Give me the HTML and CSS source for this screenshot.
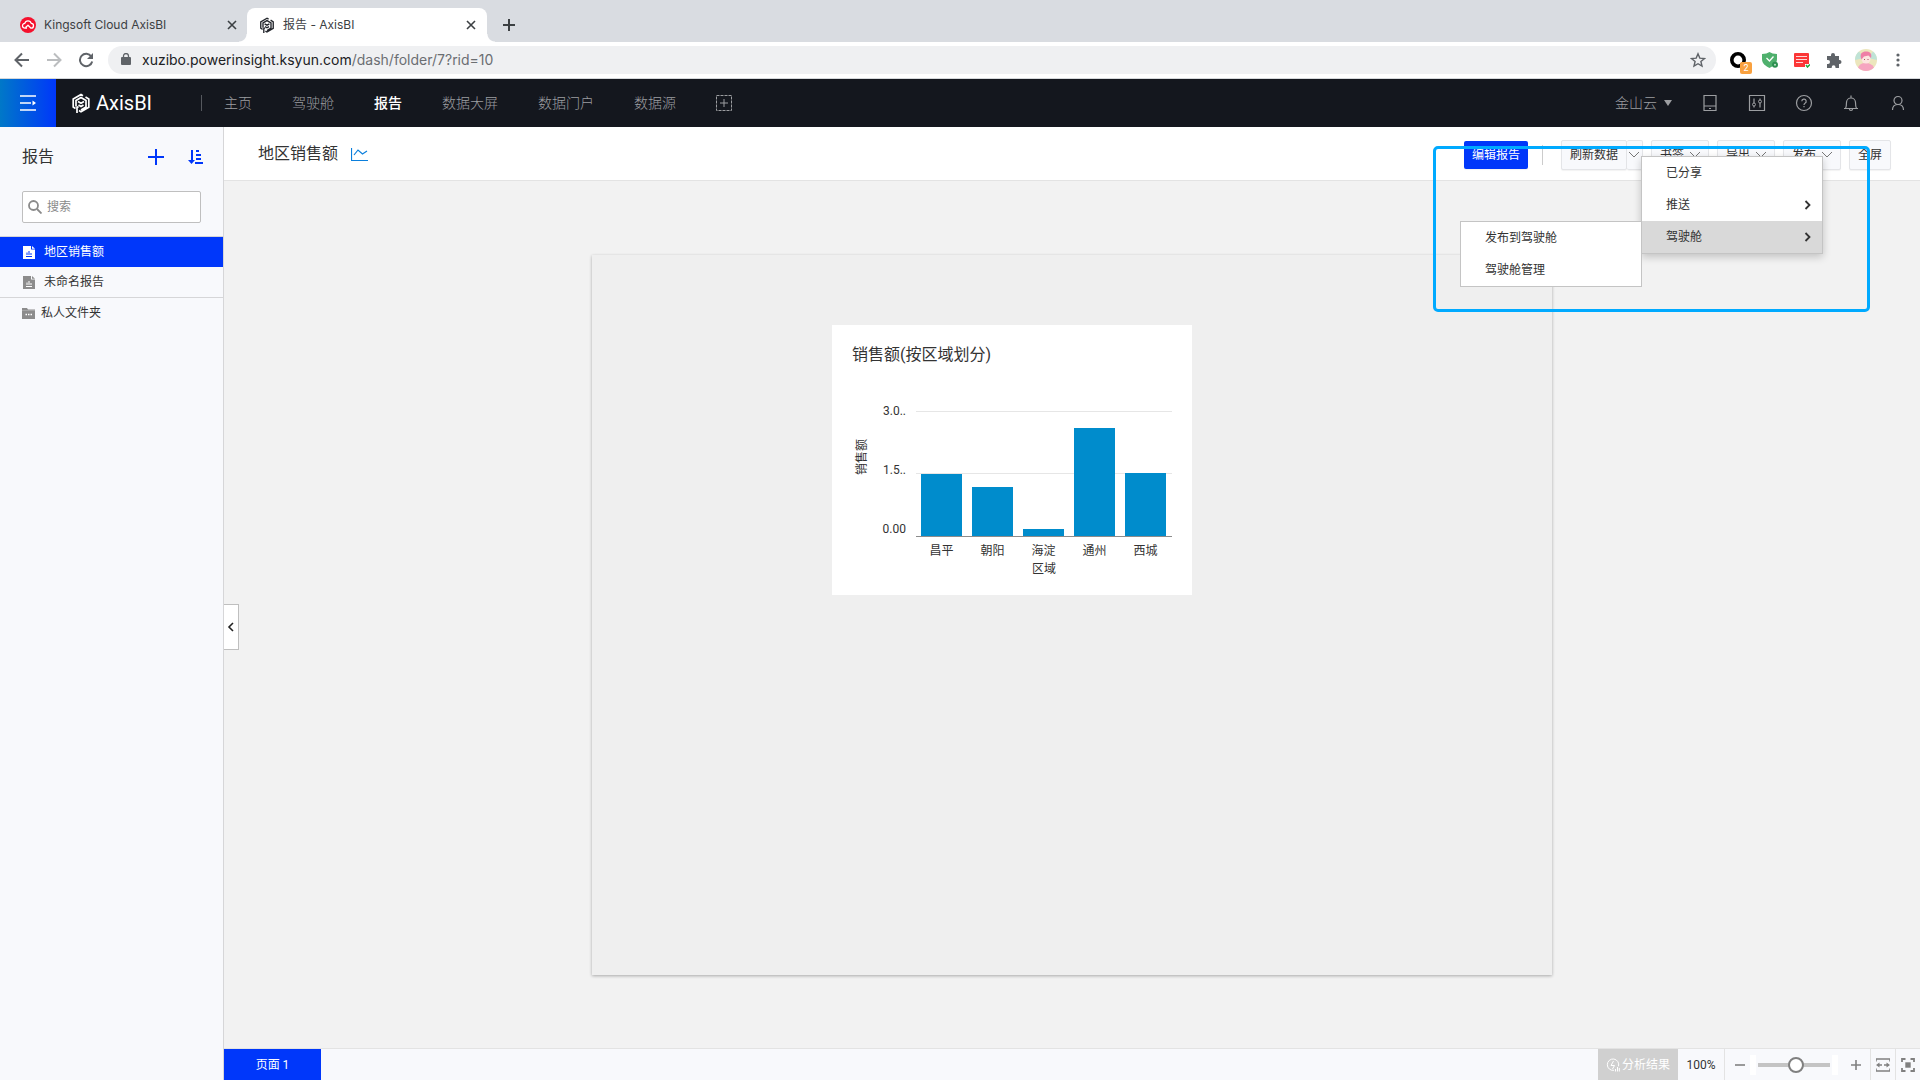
FILE: index.html
```
<!DOCTYPE html>
<html lang="zh-CN">
<head>
  <meta charset="UTF-8" />
  <meta name="viewport" content="width=device-width, initial-scale=1" />
  <title>报告 - AxisBI</title>
  <link rel="stylesheet" href="styles.css">
</head>
<body>
  <svg class="sprite" aria-hidden="true">
    <symbol id="close" viewBox="0 0 10 10"><path d="M1 1l8 8M9 1l-8 8" fill="none" stroke="currentColor" stroke-width="1.6" /></symbol>
    <symbol id="chevron-down" viewBox="0 0 10 8"><path d="M0 1l5 5 5-5" fill="none" stroke="currentColor" /></symbol>
    <symbol id="chevron-right" viewBox="0 0 8 10"><path d="M1.500 1l4 4-4 4" fill="none" stroke="currentColor" stroke-width="1.8" /></symbol>
    <symbol id="logo" viewBox="0 0 18 20">
      <path d="M3.500 15.500L1.200 14V6L9 1.500l2 1.200M4 13.500V7.500l5-3 5 3v6.500l-5 3M13.500 4L16.800 6v8.300L9 18.800l-2-1.200M5 20v-5.500l1.500-1" fill="none" stroke="currentColor" stroke-width="1.700" />
      <path d="M6 8.500l3 1.700 3-1.700M6.500 12l2.500 1.500 2.500-1.500" fill="none" stroke="currentColor" stroke-width="1.700" />
    </symbol>
    <symbol id="report" viewBox="0 0 12 13">
      <path d="M0 0h8v3.500h4V13H0z" fill="currentColor" /><path d="M9 0l3 2.700H9z" fill="currentColor" />
      <path class="cut" d="M3 10.500h6M4 9V6.500M6 9V5M8 9V7" fill="none" />
    </symbol>
  </svg>

  <div class="tab-strip">
    <div class="tab">
      <svg class="favicon" viewBox="0 0 16 16"><circle cx="8" cy="8" r="8" fill="#f5112d" /><path d="M7 11.200H5a2.400 2.400 0 0 1-.2-4.800 3.300 3.300 0 0 1 6.400 0 2.400 2.400 0 0 1-.2 4.800L8 8.200l-2.500 2.300" fill="none" stroke="#fff" stroke-width="1.300" stroke-linejoin="round" /></svg>
      <span>Kingsoft Cloud AxisBI</span>
      <button type="button" aria-label="Close tab"><svg width="10" height="10"><use href="#close" /></svg></button>
    </div>
    <div class="tab active">
      <svg class="favicon dark"><use href="#logo" /></svg>
      <span>报告 - AxisBI</span>
      <button type="button" aria-label="Close tab"><svg width="10" height="10"><use href="#close" /></svg></button>
    </div>
    <button class="new-tab" type="button" aria-label="New tab"><svg width="12" height="12" viewBox="0 0 12 12"><path d="M6 0v12M0 6h12" stroke="#3c4043" stroke-width="2" /></svg></button>
  </div>

  <div class="toolbar">
    <div class="history">
      <button type="button" aria-label="Back"><svg width="16" height="16" viewBox="0 0 16 16"><path d="M15 8H2M8 1.500L1.500 8 8 14.500" fill="none" stroke="#5f6368" stroke-width="2" /></svg></button>
      <button type="button" aria-label="Forward"><svg width="16" height="16" viewBox="0 0 16 16"><path d="M1 8h13M8 1.500L14.500 8 8 14.500" fill="none" stroke="#bbbdbf" stroke-width="2" /></svg></button>
      <button type="button" aria-label="Reload"><svg width="16" height="16" viewBox="0 0 16 16"><path d="M13.300 4.500A6.200 6.200 0 1 0 14.200 9.500" fill="none" stroke="#5f6368" stroke-width="2" /><path d="M15 1v6H9z" fill="#5f6368" /></svg></button>
    </div>
    <div class="address">
      <svg width="10" height="13" viewBox="0 0 10 13"><rect y="4" width="10" height="8" rx="1" fill="#5f6368" /><path d="M2.500 5V3a2.500 2.500 0 0 1 5 0v2" fill="none" stroke="#5f6368" stroke-width="1.300" /></svg>
      <span class="url">xuzibo.powerinsight.ksyun.com<span>/dash/folder/7?rid=10</span></span>
      <svg width="16" height="16" viewBox="0 0 16 16"><path d="M8 1.800l1.800 4.300 4.700.4-3.600 3 1.100 4.600L8 11.700 4 14.100l1.100-4.600-3.600-3 4.700-.4z" fill="none" stroke="#5f6368" stroke-width="1.400" /></svg>
    </div>
    <div class="extensions">
      <span class="ext"><svg width="16" height="16" viewBox="0 0 16 16"><circle cx="8" cy="8" r="6.200" fill="none" stroke="#000" stroke-width="3.600" /></svg><b class="badge">2</b></span>
      <span class="ext"><svg width="16" height="16" viewBox="0 0 16 16"><path d="M0 2q5 0 7.500-2Q10 2 15 2v5c0 5-4 7-7.500 9C4 14 0 12 0 7z" fill="#4fb06d" /><path d="M4.500 6l3 3 4-4.500" fill="none" stroke="#fff" stroke-width="1.300" /><circle cx="13" cy="12.800" r="3" fill="#2c8f50" /><circle cx="13" cy="12.800" r="1" fill="#bfe5ca" /></svg></span>
      <span class="ext"><svg width="16" height="16" viewBox="0 0 16 16"><rect y="1" width="15" height="14" rx="1" fill="#fb3737" /><path d="M2 4.500h11M2 7.500h11M2 10.500h7" stroke="#ffd9d9" /><path d="M11 12h5v4h-5z" fill="#fff" /><path d="M12 13l1.500 2 2.500-2.500" fill="none" stroke="#1fa83c" stroke-width="1.500" /></svg></span>
      <span class="ext"><svg width="16" height="16" viewBox="0 0 16 16"><path d="M1 4h4V3a2 2 0 0 1 4 0v1h4v4h.5a2 2 0 0 1 0 4H13v4H9.500v-.8a1.900 1.900 0 0 0-3.800 0v.8H1v-4h1a2 2 0 0 0 0-4H1z" fill="#5f6368" /></svg></span>
      <span class="ext"><svg width="22" height="22" viewBox="0 0 22 22"><circle cx="11" cy="11" r="11" fill="#ece6bd" /><path d="M0 11a11 11 0 0 1 4-8.500L9 9zM22 11a11 11 0 0 0-4-8.500L13 9z" fill="#bfe3d6" /><path d="M3 18.500c2-4 5-4.500 8-4.500s6 1 8 4.500a11 11 0 0 1-16 0z" fill="#f6a5c0" /><circle cx="11" cy="10" r="4.500" fill="#fde5e0" /><path d="M6 9C4.500 4 8 2 12 2.500c4 .5 5 3.500 4 6.500L13.500 6.500 9 7.500l-2.500 3z" fill="#ef7fa6" /><path d="M9 10.500h1M12.500 10.500h1" stroke="#a56" /></svg></span>
      <button class="ext" type="button" aria-label="Menu"><svg width="4" height="14" viewBox="0 0 4 14"><g fill="#5f6368"><circle cx="2" cy="2" r="1.600" /><circle cx="2" cy="7" r="1.600" /><circle cx="2" cy="12" r="1.600" /></g></svg></button>
    </div>
  </div>

  <header class="app-header">
    <button class="menu-btn" type="button" aria-label="菜单"><svg width="16" height="16" viewBox="0 0 16 16"><path d="M0 1h16M0 8h11M0 15h16" stroke="#fff" stroke-width="1.500" /><path d="M12.500 5.500L16 8l-3.500 2.500z" fill="#fff" /></svg></button>
    <a class="brand" href="#"><svg width="18" height="20"><use href="#logo" /></svg>AxisBI</a>
    <nav class="main-nav">
      <a href="#">主页</a>
      <a href="#">驾驶舱</a>
      <a class="current" href="#">报告</a>
      <a href="#">数据大屏</a>
      <a href="#">数据门户</a>
      <a href="#">数据源</a>
      <button type="button" aria-label="添加"><svg width="16" height="16" viewBox="0 0 16 16"><rect x=".5" y=".5" width="15" height="15" fill="none" stroke="#9c9ea1" stroke-dasharray="3 1" /><path d="M8 4v8M4 8h8" stroke="#9c9ea1" /></svg></button>
    </nav>
    <div class="account">
      <button class="tenant" type="button">金山云<svg width="8" height="6" viewBox="0 0 8 6"><path d="M0 0h8L4 6z" fill="currentColor" /></svg></button>
      <button type="button" aria-label="手机"><svg width="18" height="18" viewBox="0 0 18 18"><path d="M3 1.500h12v15H3zM3 12h12M8 14.500h2" fill="none" stroke="currentColor" stroke-width="1.200" /></svg></button>
      <button type="button" aria-label="设置"><svg width="18" height="18" viewBox="0 0 18 18"><path d="M1.500 1.500h15v15h-15zM6 4.500v9M12 4.500v9" fill="none" stroke="currentColor" stroke-width="1.200" /><g fill="#14171e" stroke="currentColor"><circle cx="6" cy="10.500" r="1.500" /><circle cx="12" cy="7.500" r="1.500" /></g></svg></button>
      <button type="button" aria-label="帮助"><svg width="18" height="18" viewBox="0 0 18 18"><g fill="none" stroke="currentColor" stroke-width="1.200"><circle cx="9" cy="9" r="7.500" /><path d="M6.800 7.200a2.200 2.200 0 1 1 3.200 2c-.8.400-1 .8-1 1.700M9 12v1.300" /></g></svg></button>
      <button type="button" aria-label="通知"><svg width="18" height="18" viewBox="0 0 18 18"><g fill="none" stroke="currentColor" stroke-width="1.200"><path d="M2 14.500h14M3.500 14.500c1-1.500 1-3 1-6a4.500 4.500 0 0 1 9 0c0 3 0 4.500 1 6M7.500 15a1.500 1.500 0 0 0 3 0M9 1.500V4" /></g></svg></button>
      <button type="button" aria-label="用户"><svg width="18" height="18" viewBox="0 0 18 18"><g fill="none" stroke="currentColor" stroke-width="1.200"><circle cx="9" cy="6.500" r="4" /><path d="M3.500 16c0-3.500 2-5.500 5.500-5.500s5.500 2 5.500 5.500" /></g></svg></button>
    </div>
  </header>

  <div class="workspace">
    <aside class="sidebar">
      <div class="sidebar-head">
        <h2>报告</h2>
        <button type="button" aria-label="新建"><svg width="16" height="16" viewBox="0 0 16 16"><path d="M8 0v16M0 8h16" stroke="currentColor" stroke-width="2" /></svg></button>
        <button type="button" aria-label="排序"><svg width="16" height="16" viewBox="0 0 16 16"><path d="M4 1v12M8 2h3M8 6h5M8 10h5M7 14h8" stroke="currentColor" stroke-width="2" /><path d="M0 11h7l-3.500 4z" fill="currentColor" /></svg></button>
      </div>
      <div class="search">
        <svg width="14" height="14" viewBox="0 0 14 14"><g fill="none" stroke="#8a8a8a" stroke-width="1.800"><circle cx="5.500" cy="5.500" r="4.500" /><path d="M9 9l4.500 4.500" /></g></svg>
        <input type="text" placeholder="搜索" aria-label="搜索" />
      </div>
      <ul class="report-list">
        <li class="selected"><a href="#"><svg width="12" height="13"><use href="#report" /></svg>地区销售额</a></li>
        <li><a href="#"><svg width="12" height="13"><use href="#report" /></svg>未命名报告</a></li>
      </ul>
      <a class="folder" href="#"><svg width="13" height="11" viewBox="0 0 13 11"><path d="M0 0h5l1 1.500h7V11H0z" fill="#8c8c8c" /><path d="M0 2.500h13" stroke="#b5b5b5" stroke-width=".6" /><path d="M3.500 6.500h1.500M6 6.500h1.500M8.500 6.500H10" stroke="#fff" stroke-width="1.300" /></svg>私人文件夹</a>
    </aside>

    <main class="content">
      <div class="report-bar">
        <h1>地区销售额</h1>
        <svg width="17" height="14" viewBox="0 0 17 14"><path d="M.5 1v12.500H17M3 8l4-5 4.500 4L16 4" fill="none" stroke="#0b7fdc" stroke-width="1.200" /></svg>
        <div class="actions">
          <button class="btn primary" type="button">编辑报告</button>
          <div class="split">
            <button class="btn" type="button">刷新数据</button>
            <button class="btn arrow" type="button" aria-label="刷新选项"><svg width="10" height="8"><use href="#chevron-down" /></svg></button>
          </div>
          <button class="btn" type="button">书签<svg width="10" height="8"><use href="#chevron-down" /></svg></button>
          <button class="btn" type="button">导出<svg width="10" height="8"><use href="#chevron-down" /></svg></button>
          <div class="dropdown">
            <button class="btn" type="button">发布<svg width="10" height="8"><use href="#chevron-down" /></svg></button>
            <div class="menu">
              <button type="button">已分享</button>
              <button type="button">推送<svg width="8" height="10"><use href="#chevron-right" /></svg></button>
              <button class="hover" type="button">驾驶舱<svg width="8" height="10"><use href="#chevron-right" /></svg></button>
              <div class="submenu">
                <button type="button">发布到驾驶舱</button>
                <button type="button">驾驶舱管理</button>
              </div>
            </div>
          </div>
          <button class="btn" type="button">全屏</button>
          <div class="highlight"></div>
        </div>
      </div>

      <div class="canvas">
        <button class="collapse" type="button" aria-label="收起"><svg width="8" height="10" viewBox="0 0 8 10"><path d="M6 1L2 5l4 4" fill="none" stroke="#222" stroke-width="1.600" /></svg></button>
        <div class="board">
          <section class="card">
            <h3>销售额(按区域划分)</h3>
            <div class="chart">
              <div class="y-title">销售额</div>
              <div class="y-axis"><span>3.0..</span><span>1.5..</span><span>0.00</span></div>
              <div class="plot">
                <div class="bars">
                  <div style="height: 49%"></div>
                  <div style="height: 39%"></div>
                  <div style="height: 5%"></div>
                  <div style="height: 86%"></div>
                  <div style="height: 50%"></div>
                </div>
                <div class="x-axis"><span>昌平</span><span>朝阳</span><span>海淀</span><span>通州</span><span>西城</span></div>
                <div class="x-title">区域</div>
              </div>
            </div>
          </section>
        </div>
      </div>

      <footer class="status-bar">
        <button class="page-tab" type="button">页面 1</button>
        <button class="analysis" type="button" disabled><svg width="14" height="14" viewBox="0 0 14 14"><g fill="none" stroke="currentColor"><path d="M8 12.300a5.700 5.700 0 1 1 4.500-4M7.500 3L5 7.500h3.500L6.500 11" /><path d="M9.500 13.500V11M11.500 13.500V9M13.300 13.500V10" /></g></svg>分析结果</button>
        <span class="percent">100%</span>
        <div class="zoom">
          <button type="button" aria-label="缩小"><svg width="10" height="10" viewBox="0 0 10 10"><path d="M0 5h10" stroke="#808080" stroke-width="1.600" /></svg></button>
          <input type="range" min="0" max="200" value="108" aria-label="缩放" />
          <button type="button" aria-label="放大"><svg width="10" height="10" viewBox="0 0 10 10"><path d="M0 5h10M5 0v10" stroke="#808080" stroke-width="1.600" /></svg></button>
        </div>
        <button class="fit" type="button" aria-label="适应宽度"><svg width="14" height="14" viewBox="0 0 14 14"><path d="M0 3.500V1h14v2.500M0 10.500V13h14v-2.500M2 7h4M8 7h4" fill="none" stroke="#808080" stroke-width="1.500" /><path d="M0 7l3.500-2.500v5zM14 7l-3.500-2.500v5z" fill="#808080" /></svg></button>
        <button class="fit" type="button" aria-label="适应页面"><svg width="14" height="14" viewBox="0 0 14 14"><path d="M1 4V1h3.500M9.500 1H13v3M13 10v3H9.500M4.500 13H1v-3" fill="none" stroke="#808080" stroke-width="1.800" /><path d="M4.300 4.300h5.400v5.400H4.300z" fill="#808080" /></svg></button>
      </footer>
    </main>
  </div>
</body>
</html>
```
FILE: styles.css
```
:root {
  --blue: #0037fa;
  --dark: #14171e;
  --panel: #f8f9fc;
  --line: #d6d6d8;
  --text: #333;
  --bar: #008ccc;
}

* {
  box-sizing: border-box;
}

body {
  margin: 0;
  height: 100vh;
  display: flex;
  flex-direction: column;
  overflow: hidden;
  font-family: Roboto, "Noto Sans CJK SC", sans-serif;
  font-weight: 400;
  font-size: 12px;
  line-height: 16px;
  color: var(--text);
}

button {
  display: flex;
  align-items: center;
  justify-content: center;
  padding: 0;
  border: 0;
  background: none;
  color: inherit;
  font: inherit;
}

a {
  color: inherit;
  text-decoration: none;
}

svg {
  flex: none;
}

h1, h2, h3 {
  margin: 0;
  font-weight: 400;
  font-size: 16px;
  line-height: 24px;
}

.sprite {
  position: absolute;
  width: 0;
  height: 0;
}

/* browser window */
.tab-strip {
  display: flex;
  height: 42px;
  padding-top: 8px;
  background: #d9dce1;
  color: #3c4043;
  font-family: Inter, "Noto Sans CJK SC", sans-serif;
}

.tab {
  display: flex;
  align-items: center;
  gap: 8px;
  width: 240px;
  padding: 0 11px 0 12px;
  border-radius: 8px 8px 0 0;
}

.tab:first-child {
  width: 247px;
  padding: 0 10px 0 20px;
}

.tab.active {
  position: relative;
  background: #fff;
}

.tab.active::before,
.tab.active::after {
  content: "";
  position: absolute;
  bottom: 0;
  width: 8px;
  height: 8px;
}

.tab.active::before {
  right: 100%;
  background: radial-gradient(circle at 0 0, transparent 7px, #fff 8px);
}

.tab.active::after {
  left: 100%;
  background: radial-gradient(circle at 100% 0, transparent 7px, #fff 8px);
}

.tab span {
  flex: 1;
}

.favicon {
  width: 16px;
  height: 16px;
}

.favicon.dark {
  color: #23262c;
}

.new-tab {
  width: 44px;
}

.toolbar {
  display: flex;
  align-items: center;
  height: 37px;
  padding-bottom: 1px;
  border-bottom: 1px solid #d5d8db;
  background: #fff;
}

.history {
  display: flex;
  gap: 16px;
  padding: 0 14px;
}

.address {
  display: flex;
  align-items: center;
  flex: 1;
  height: 28px;
  padding: 0 10px 0 13px;
  border-radius: 14px;
  background: #eff0f2;
}

.url {
  flex: 1;
  padding-left: 11px;
  font-family: Inter, sans-serif;
  font-size: 14px;
  color: #202124;
}

.url span {
  color: #6b6e72;
}

.extensions {
  display: flex;
  padding: 0 6px;
}

.ext {
  position: relative;
  display: flex;
  align-items: center;
  justify-content: center;
  width: 32px;
}

.badge {
  position: absolute;
  bottom: -3px;
  left: 18px;
  width: 12px;
  height: 12px;
  border-radius: 2px;
  background: #f9a13f;
  color: #fff;
  font-size: 9px;
  font-weight: 400;
  line-height: 12px;
  text-align: center;
}

/* application header */
.app-header {
  display: flex;
  align-items: center;
  height: 48px;
  background: var(--dark);
  color: #9c9ea1;
  font-size: 14px;
  font-weight: 300;
  line-height: 20px;
}

.menu-btn {
  width: 56px;
  height: 48px;
  background: linear-gradient(90deg, #0078c8, #0037fa);
}

.brand {
  display: flex;
  align-items: center;
  gap: 6px;
  width: 145px;
  padding-left: 16px;
  color: #fff;
  font-size: 20px;
  font-weight: 400;
}

.main-nav {
  display: flex;
  align-items: center;
  gap: 40px;
}

.main-nav::before {
  content: "";
  height: 16px;
  margin-right: -18px;
  border-left: 1px solid #55585e;
}

.main-nav .current {
  color: #fff;
  font-weight: 500;
}

.account {
  display: flex;
  align-items: center;
  gap: 29px;
  margin-left: auto;
  padding-right: 13px;
}

.tenant {
  gap: 7px;
}

/* workspace */
.workspace {
  display: flex;
  flex: 1;
  min-height: 0;
}

.sidebar {
  width: 224px;
  border-right: 1px solid var(--line);
  background: var(--panel);
}

.sidebar-head {
  display: flex;
  align-items: center;
  gap: 24px;
  padding: 18px 19px 10px 22px;
}

.sidebar-head h2 {
  flex: 1;
}

.sidebar-head button {
  color: var(--blue);
}

.search {
  display: flex;
  align-items: center;
  gap: 5px;
  height: 32px;
  margin: 12px 22px 13px;
  padding: 0 5px;
  border: 1px solid #bfbfbf;
  border-radius: 2px;
  background: #fff;
}

.search input {
  flex: 1;
  min-width: 0;
  padding: 0;
  border: 0;
  outline: 0;
  background: none;
  font: inherit;
}

.search input::placeholder {
  color: #8a8a8a;
}

.report-list {
  margin: 0;
  padding: 0;
  border: solid var(--line);
  border-width: 1px 0;
  list-style: none;
}

.report-list a {
  display: flex;
  align-items: center;
  gap: 9px;
  height: 30px;
  padding-left: 23px;
}

.report-list svg {
  --cut: #fff;
  color: #8c8c8c;
}

.report-list .selected {
  background: var(--blue);
  color: #fff;
}

.report-list .selected svg {
  --cut: var(--blue);
  color: #fff;
}

.cut {
  stroke: var(--cut);
}

.folder {
  display: flex;
  align-items: center;
  gap: 6px;
  height: 30px;
  padding-left: 22px;
}

.content {
  display: flex;
  flex-direction: column;
  flex: 1;
  min-width: 0;
}

.report-bar {
  display: flex;
  align-items: center;
  gap: 13px;
  height: 54px;
  padding: 0 29px 0 34px;
  border-bottom: 1px solid #e3e3e3;
  background: #fff;
}

.actions {
  position: relative;
  display: flex;
  align-items: center;
  gap: 8px;
  margin-left: auto;
  padding-top: 3px;
}

.btn {
  gap: 6px;
  height: 30px;
  padding: 0 8px;
  border: 1px solid #e4e5e8;
  border-radius: 2px;
  background: var(--panel);
  box-shadow: 0 1px 1px rgba(0, 0, 0, 0.05);
}

.btn svg {
  color: #777;
}

.btn.primary {
  height: 28px;
  border: 0;
  background: var(--blue);
  color: #fff;
}

.split {
  display: flex;
  margin-left: 6px;
}

.split::before {
  content: "";
  align-self: center;
  height: 20px;
  margin-right: 18px;
  border-left: 1px solid #ccc;
}

.split .arrow {
  width: 16px;
  padding: 0;
  border-left: 0;
}

.dropdown {
  position: relative;
}

.menu {
  position: absolute;
  top: 16px;
  right: 18px;
  z-index: 2;
  width: 182px;
  border: 1px solid #c4c4c4;
  background: #fff;
  box-shadow: 0 3px 8px rgba(0, 0, 0, 0.2);
}

.menu button {
  justify-content: space-between;
  width: 100%;
  height: 32px;
  padding: 0 10px 0 24px;
}

.menu .hover {
  background: #d9d9d9;
}

.submenu {
  position: absolute;
  top: 64px;
  right: 100%;
  width: 182px;
  border: 1px solid #c4c4c4;
  background: #fff;
}

.highlight {
  position: absolute;
  top: 9px;
  left: -31px;
  z-index: 3;
  width: 437px;
  height: 166px;
  border: 3px solid #00aaff;
  border-radius: 5px;
}

.canvas {
  position: relative;
  display: flex;
  align-items: center;
  justify-content: center;
  flex: 1;
  background: #f2f2f2;
}

.collapse {
  position: absolute;
  top: calc(50% - 11px);
  left: 0;
  width: 15px;
  height: 46px;
  border: 1px solid #bfbfbf;
  border-left: 0;
  background: #fff;
}

.board {
  width: 960px;
  height: 720px;
  padding: 70px 240px;
  background: #efefef;
  box-shadow: 0 1px 3px rgba(0, 0, 0, 0.3);
}

.card {
  width: 360px;
  height: 270px;
  padding: 18px 20px;
  background: #fff;
}

.chart {
  display: flex;
  margin-top: 44px;
}

.y-title {
  align-self: flex-start;
  width: 16px;
  margin-left: 2px;
  padding-bottom: 28px;
  writing-mode: vertical-rl;
  text-orientation: sideways;
  transform: rotate(180deg);
}

.y-axis {
  display: flex;
  flex-direction: column;
  justify-content: space-between;
  align-items: flex-end;
  width: 36px;
  height: 134px;
  margin-top: -8px;
}

.plot {
  flex: 1;
  margin-left: 10px;
}

.bars {
  display: flex;
  align-items: flex-end;
  gap: 10px;
  height: 126px;
  padding: 0 6px 0 5px;
  border-bottom: 1px solid #8c8c8c;
  background: linear-gradient(#e6e6e6, #e6e6e6) 0 0 / 100% 1px no-repeat, linear-gradient(#e6e6e6, #e6e6e6) 0 50% / 100% 1px no-repeat;
}

.bars div {
  flex: 1;
  background: var(--bar);
}

.x-axis {
  display: flex;
  gap: 10px;
  padding: 6px 6px 0 5px;
}

.x-axis span {
  flex: 1;
  text-align: center;
}

.x-title {
  padding-top: 2px;
  text-align: center;
}

.status-bar {
  display: flex;
  height: 32px;
  border-top: 1px solid #e3e3e3;
  background: var(--panel);
}

.page-tab {
  width: 97px;
  background: var(--blue);
  color: #fff;
}

.analysis {
  gap: 2px;
  width: 80px;
  margin-left: auto;
  background: #d0d0d0;
  color: #fff;
}

.percent {
  width: 47px;
  border-right: 1px solid #e3e3e3;
  line-height: 32px;
  text-align: center;
}

.zoom {
  display: flex;
  align-items: center;
  justify-content: space-between;
  width: 145px;
  padding: 0 9px 0 10px;
}

.zoom input {
  appearance: none;
  width: 88px;
  height: 20px;
  margin: 0 8px 0 0;
  border: solid #fff;
  border-width: 0 6px;
  background: linear-gradient(#c4c4c4, #c4c4c4) center / 72px 4px no-repeat;
}

.zoom input::-webkit-slider-thumb {
  appearance: none;
  width: 16px;
  height: 16px;
  border: 2px solid #808080;
  border-radius: 50%;
  background: #fff;
}

.fit {
  width: 25px;
  border-left: 1px solid #e3e3e3;
}
```
